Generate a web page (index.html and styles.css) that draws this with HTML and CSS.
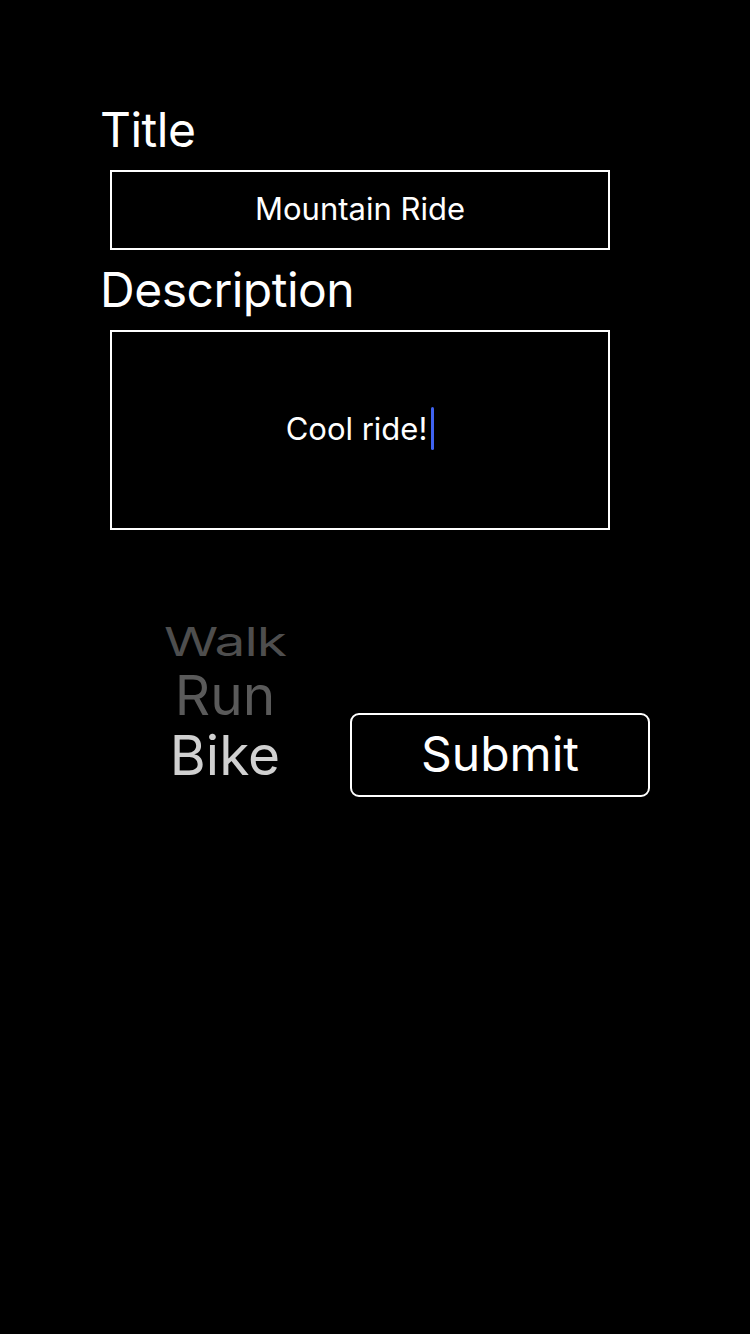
FILE: index.html
```html
<!DOCTYPE html>
<html>
<head>
<meta charset="utf-8">
<link rel="stylesheet" href="styles.css">
</head>
<body>
<div class="form">
  <div class="label">Title</div>
  <div class="field title-field"><span class="value">Mountain Ride</span></div>
  <div class="label desc-label">Description</div>
  <div class="field desc-field"><span class="value">Cool ride!</span><span class="cursor"></span></div>
  <div class="row">
    <div class="picker">
      <div class="item walk">Walk</div>
      <div class="item run">Run</div>
      <div class="item bike">Bike</div>
    </div>
    <div class="submit">Submit</div>
  </div>
</div>
</body>
</html>
```

FILE: styles.css
```css
html, body {
  margin: 0;
  padding: 0;
  background: #000;
  width: 750px;
  height: 1334px;
  overflow: hidden;
}
body {
  font-family: Inter, "Liberation Sans", sans-serif;
  color: #fff;
}
.form {
  display: flex;
  flex-direction: column;
  padding: 100px 0 0 100px;
}
.label {
  font-size: 48px;
  line-height: 60px;
  height: 60px;
  letter-spacing: -0.5px;
}
.field {
  margin-left: 10px;
  width: 500px;
  box-sizing: border-box;
  border: 2px solid #fff;
  display: flex;
  align-items: center;
  justify-content: center;
  font-size: 31px;
  padding-bottom: 4px;
}
.title-field {
  margin-top: 10px;
  height: 80px;
}
.desc-label {
  margin-top: 10px;
}
.desc-field {
  margin-top: 10px;
  height: 200px;
}
.cursor {
  display: inline-block;
  width: 3px;
  height: 43px;
  border-radius: 2px;
  background: #3f63f0;
  margin-left: 4px;
}
.row {
  display: flex;
  margin-top: 88px;
}
.picker {
  width: 250px;
  display: flex;
  flex-direction: column;
  align-items: center;
}
.item {
  font-size: 55px;
  line-height: 50px;
  height: 50px;
}
.walk {
  color: #4e4e4e;
  transform: scaleY(0.72);
  height: 48px;
  line-height: 48px;
  letter-spacing: -1px;
}
.run {
  color: #5a5a5a;
  height: 58px;
  line-height: 58px;
}
.bike {
  color: #d0d0d0;
  height: 62px;
  line-height: 62px;
}
.submit {
  align-self: flex-end;
  width: 300px;
  height: 84px;
  box-sizing: border-box;
  border: 2px solid #fff;
  border-radius: 9px;
  display: flex;
  align-items: center;
  justify-content: center;
  font-size: 48px;
  padding-bottom: 4px;
  margin-bottom: -11px;
}
```
